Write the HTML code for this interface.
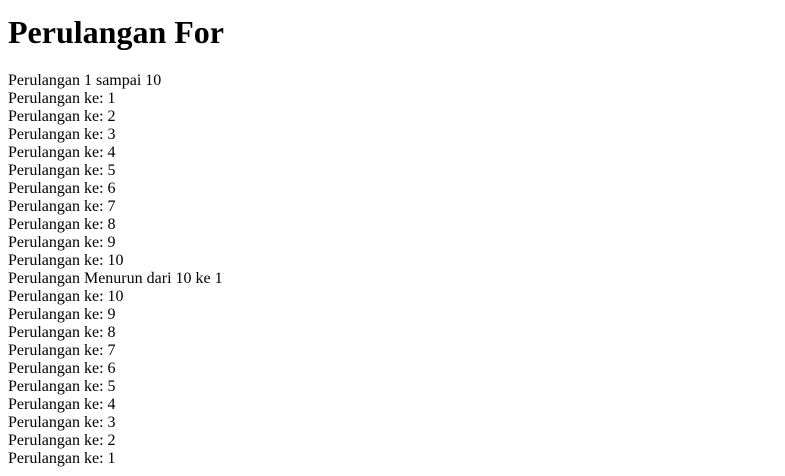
<!DOCTYPE html>
<html><head><style>
body{margin:8px;font-family:"Liberation Serif",serif;font-size:16px;line-height:18px;color:#000;background:#fff}
h1{font-size:32px;line-height:37px;margin:14px 0 21px 0;font-weight:bold}
</style></head><body>
<h1>Perulangan For</h1>
Perulangan 1 sampai 10<br>
Perulangan ke: 1<br>
Perulangan ke: 2<br>
Perulangan ke: 3<br>
Perulangan ke: 4<br>
Perulangan ke: 5<br>
Perulangan ke: 6<br>
Perulangan ke: 7<br>
Perulangan ke: 8<br>
Perulangan ke: 9<br>
Perulangan ke: 10<br>
Perulangan Menurun dari 10 ke 1<br>
Perulangan ke: 10<br>
Perulangan ke: 9<br>
Perulangan ke: 8<br>
Perulangan ke: 7<br>
Perulangan ke: 6<br>
Perulangan ke: 5<br>
Perulangan ke: 4<br>
Perulangan ke: 3<br>
Perulangan ke: 2<br>
Perulangan ke: 1<br>
</body></html>
